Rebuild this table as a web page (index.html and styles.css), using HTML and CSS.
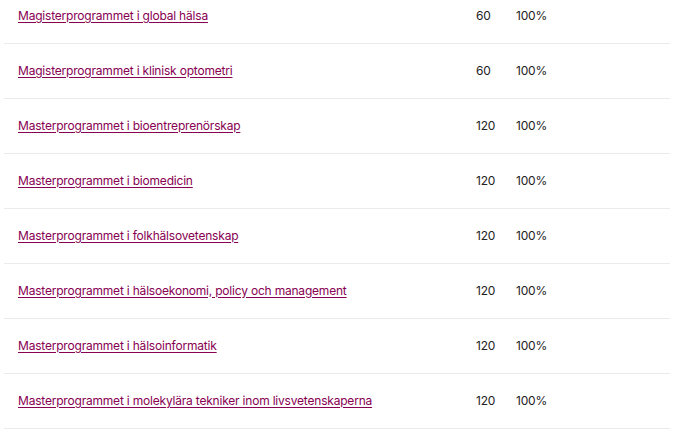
FILE: index.html
```html
<!DOCTYPE html>
<html lang="sv">
<head>
    <meta charset="UTF-8">
    <meta name="viewport" content="width=device-width, initial-scale=1.0">
    <title>Program</title>
    <link rel="stylesheet" href="styles.css">
</head>
<body>
    <table class="program-table">
        <tbody>
            <tr>
                <td class="name"><a href="#">Magisterprogrammet i global hälsa</a></td>
                <td class="credits">60</td>
                <td class="rate">100%</td>
            </tr>
            <tr>
                <td class="name"><a href="#">Magisterprogrammet i klinisk optometri</a></td>
                <td class="credits">60</td>
                <td class="rate">100%</td>
            </tr>
            <tr>
                <td class="name"><a href="#">Masterprogrammet i bioentreprenörskap</a></td>
                <td class="credits">120</td>
                <td class="rate">100%</td>
            </tr>
            <tr>
                <td class="name"><a href="#">Masterprogrammet i biomedicin</a></td>
                <td class="credits">120</td>
                <td class="rate">100%</td>
            </tr>
            <tr>
                <td class="name"><a href="#">Masterprogrammet i folkhälsovetenskap</a></td>
                <td class="credits">120</td>
                <td class="rate">100%</td>
            </tr>
            <tr>
                <td class="name"><a href="#">Masterprogrammet i hälsoekonomi, policy och management</a></td>
                <td class="credits">120</td>
                <td class="rate">100%</td>
            </tr>
            <tr>
                <td class="name"><a href="#">Masterprogrammet i hälsoinformatik</a></td>
                <td class="credits">120</td>
                <td class="rate">100%</td>
            </tr>
            <tr>
                <td class="name"><a href="#">Masterprogrammet i molekylära tekniker inom livsvetenskaperna</a></td>
                <td class="credits">120</td>
                <td class="rate">100%</td>
            </tr>
        </tbody>
    </table>
</body>
</html>
```

FILE: styles.css
```css
body {
    font-family: Inter, 'Liberation Sans', sans-serif;
    font-size: 12px;
    letter-spacing: -0.2px;
    color: #222;
    margin: 0;
    padding: 0 23px 0 4px;
    background-color: white;
}
.program-table {
    width: 666px;
    border-collapse: collapse;
    margin-top: -11px;
}
.program-table td {
    height: 52px;
    padding: 0 0 2px 0;
    border-bottom: 1px solid #ebebeb;
    vertical-align: middle;
}
.name {
    padding-left: 14px !important;
    width: 458px;
}
.name a {
    color: #870052;
    text-decoration: underline;
    text-underline-offset: 2px;
}
.credits {
    width: 40px;
}
```
